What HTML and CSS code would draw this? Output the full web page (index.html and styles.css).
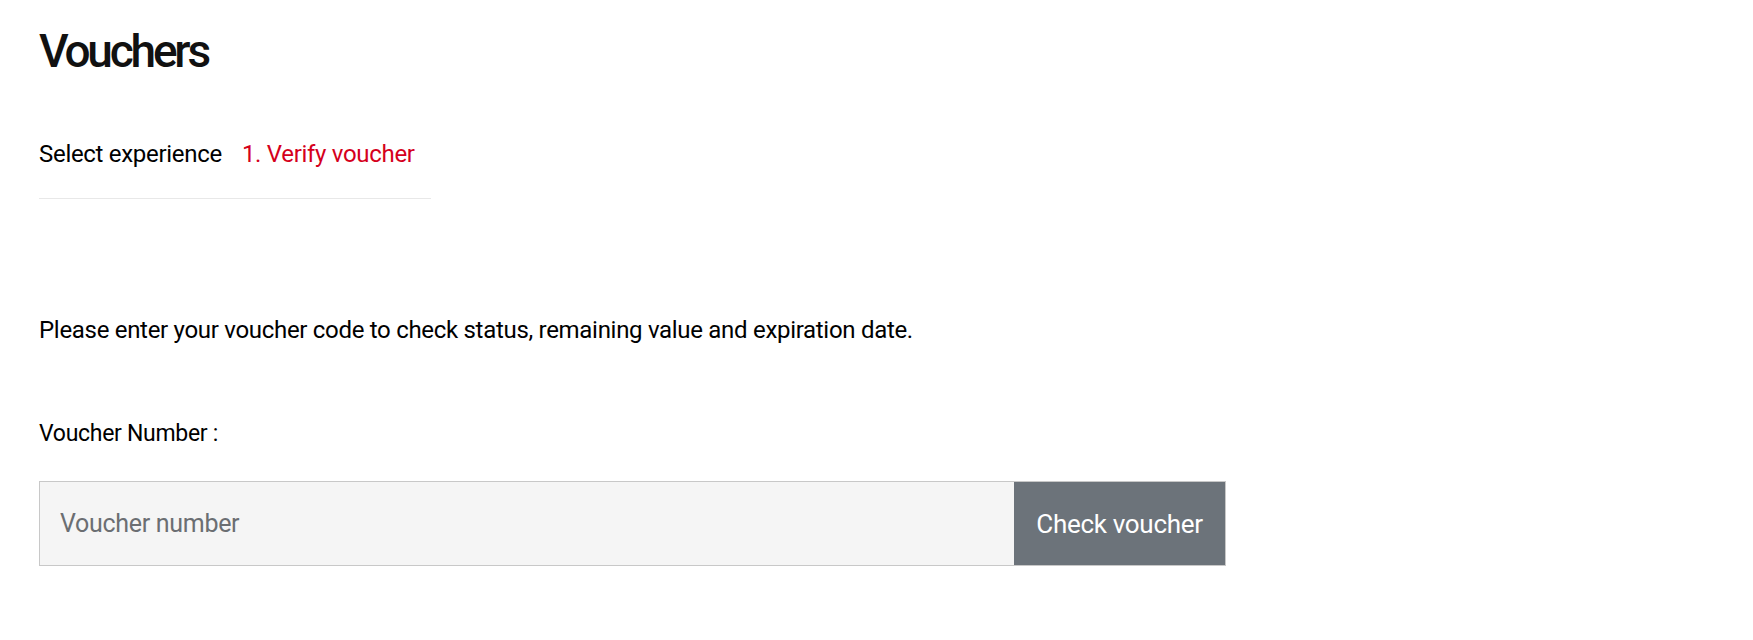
FILE: index.html
```html
<!DOCTYPE html>
<html>
    <head>
        <title>Vouchers</title>
        <link rel="stylesheet" href="styles.css">
    </head>
    <body>
        <div class="page">
            <h1 class="title">Vouchers</h1>
            <div class="steps">
                <span class="step">Select experience</span>
                <span class="step active">1. Verify voucher</span>
            </div>
            <p class="intro">Please enter your voucher code to check status, remaining value and expiration date.</p>
            <form method="get" action="">
                <label class="lbl" for="code">Voucher Number :</label>
                <div class="field">
                    <input type="text" id="code" placeholder="Voucher number">
                    <button type="submit" class="btn">Check voucher</button>
                </div>
            </form>
        </div>
    </body>
</html>
```

FILE: styles.css
```css
*
{
    box-sizing: border-box;
    outline: none;
}

body
{
    margin: 0;
    background-color: #fff;
    color: #000;
    font-family: Roboto, "Liberation Sans", sans-serif;
    letter-spacing: -0.3px;
}

.page
{
    padding: 23px 39px;
}

.title
{
    margin: 0;
    font-size: 46px;
    line-height: 56px;
    font-weight: 500;
    letter-spacing: -3.2px;
    color: #111;
}

.steps
{
    display: flex;
    gap: 20px;
    width: 392px;
    margin-top: 60px;
    padding-bottom: 29px;
    border-bottom: 1px solid #e8e8e8;
    font-size: 24px;
    line-height: 30px;
}

.step.active
{
    color: #d5001c;
}

.intro
{
    margin: 116px 0 0 0;
    font-size: 24px;
    line-height: 30px;
}

.lbl
{
    display: block;
    margin-top: 74px;
    font-size: 23px;
    line-height: 30px;
}

.field
{
    display: flex;
    width: 1187px;
    height: 85px;
    margin-top: 32px;
    border: 1px solid #c8c8c8;
}

input[type="text"]
{
    flex: 1;
    height: 100%;
    margin: 0;
    border: 0;
    padding: 0 20px;
    background-color: #f5f5f5;
    font-family: inherit;
    font-size: 25px;
    letter-spacing: -0.3px;
    color: #000;
}

input[type="text"]::placeholder
{
    color: #6b6e72;
}

.btn
{
    width: 211px;
    height: 100%;
    margin: 0;
    border: 0;
    padding: 0;
    background-color: #6c737a;
    color: #fff;
    font-family: inherit;
    font-size: 26px;
    letter-spacing: -0.3px;
    cursor: pointer;
}
```
